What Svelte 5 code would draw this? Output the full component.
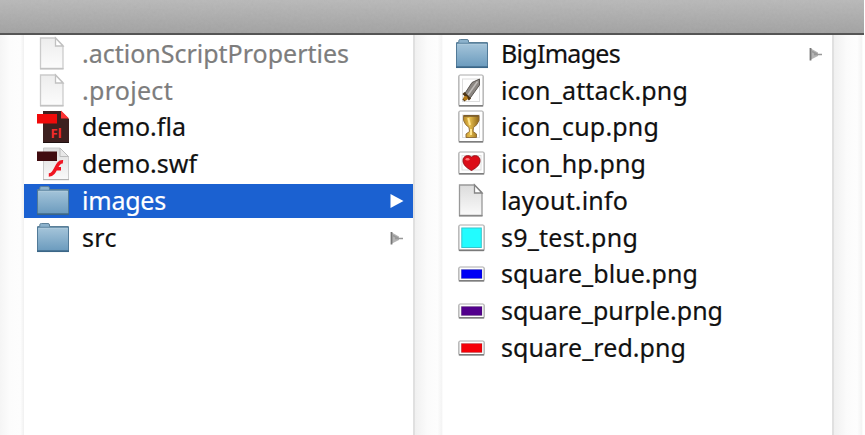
<script>
  const left = [
    { name: '.actionScriptProperties', icon: 'doc', dim: true, w: 267 },
    { name: '.project', icon: 'doc', dim: true, w: 91 },
    { name: 'demo.fla', icon: 'fla', w: 104 },
    { name: 'demo.swf', icon: 'swf', w: 115 },
    { name: 'images', icon: 'folder', selected: true, arrow: true, w: 84 },
    { name: 'src', icon: 'folder', arrow: true, w: 35 },
  ];
  const right = [
    { name: 'BigImages', icon: 'folder', arrow: true, w: 119 },
    { name: 'icon_attack.png', icon: 'sword', w: 187 },
    { name: 'icon_cup.png', icon: 'cup', w: 158 },
    { name: 'icon_hp.png', icon: 'heart', w: 145 },
    { name: 'layout.info', icon: 'doc', w: 127 },
    { name: 's9_test.png', icon: 'cyan', w: 137 },
    { name: 'square_blue.png', icon: 'bar', color: '#0000f5', w: 197 },
    { name: 'square_purple.png', icon: 'bar', color: '#52008c', w: 222 },
    { name: 'square_red.png', icon: 'bar', color: '#f50008', w: 185 },
  ];

  function fit(node, width) {
    const range = document.createRange();
    range.selectNodeContents(node);
    const natural = range.getBoundingClientRect().width;
    node.style.letterSpacing = `${(width - natural) / node.textContent.length}px`;
  }
</script>

{#snippet frame(x, y, w, h)}
  <rect x={x - 1} {y} width={w + 2} height={h + 1.5} rx="2" fill="#999" opacity=".5" />
  <rect {x} {y} width={w} height={h} rx="1" fill="#fff" stroke="#aaa" stroke-width="1" />
  <path d="M{x} {y + h + 0.3}h{w}" stroke="#777" stroke-width="1.3" />
{/snippet}

{#snippet glyph(item)}
  <svg class="icon" class:faded={item.dim && item.icon === 'doc'} width="36" height="36" viewBox="0 0 36 36">
    {#if item.icon === 'doc'}
      <path d="M5.5 2H20.5L28 9.5V32.5H5.5Z" fill="url(#paper)" stroke="#999" stroke-width="1.3" />
      <path d="M5 32.8H28.5" stroke="#858585" stroke-width="1.4" />
      <path d="M20.5 2V10H28Z" fill="#fff" stroke="#858585" stroke-width="1.3" />
    {:else if item.icon === 'folder'}
      <path d="M2.7 31V6.5H4.8V4.7Q4.8 3.5 6.5 3.5H13Q14.5 3.5 14.5 5V6.5H33.3V31Z" fill="#8cb2cc" stroke="#5d8199" />
      <rect x="2.5" y="7.3" width="31" height="24" fill="url(#blue)" stroke="#517a98" />
      <path d="M3.5 8.3H32.5" stroke="#b0cbdc" />
      <path d="M2 31.2H34" stroke="#3b6687" stroke-width="1.7" />
    {:else if item.icon === 'fla'}
      <path d="M8 2H26L34 10V34H8Z" fill="#3d201f" />
      <path d="M8 33.5H34" stroke="#1e1010" />
      <path d="M26 1.5V9.5H34Z" fill="#f33" />
      <rect x="2" y="5" width="20" height="9.5" fill="#f00a0a" />
      <text x="15.5" y="28.5" font-size="13" font-weight="700" fill="#f22b2b">Fl</text>
    {:else if item.icon === 'swf'}
      <path d="M8.5 2H25L33.5 10.5V33.5H8.5Z" fill="url(#paper)" stroke="#ccc" />
      <path d="M25 2V10.5H33.5Z" fill="#e8e8e8" stroke="#bbb" />
      <path d="M8 33.7H34" stroke="#aaa" />
      <rect x="2" y="5.5" width="20" height="9.5" fill="#400c10" />
      <path d="M28 15.8C20.5 15 21.5 29 13.8 29M20 22.7H26" fill="none" stroke="#f01522" stroke-width="3.5" />
    {:else if item.icon === 'sword'}
      {@render frame(5, 2, 24, 30.5)}
      <rect x="8.5" y="6" width="17" height="22.5" fill="#fff" stroke="#ddd" />
      <path d="M10.5 21L18 9.5L25.5 6V12L15.5 26Z" fill="#8b8681" stroke="#5b5651" />
      <path d="M14 22L23.5 8.5" stroke="#c0bcb8" stroke-width="1.5" />
      <path d="M9.5 20L16 26.5M9.5 27.5L13 23.5" stroke="#4e3515" stroke-width="3" />
      <circle cx="11.5" cy="25.3" r="2.2" fill="#b47a16" />
    {:else if item.icon === 'cup'}
      {@render frame(5, 2, 24, 30.5)}
      <rect x="8.5" y="6" width="17" height="22.5" fill="#fff" stroke="#ddd" />
      <path d="M9.5 6.5H25V11.5Q23.5 16 19.5 18.5L19 22.5L22.5 25V28.5H12V25L15.5 22.5L15 18.5Q11 16 9.5 11.5Z" fill="url(#gold)" stroke="#8a6731" stroke-width=".9" />
      <path d="M10 7H24.5" stroke="#76582b" stroke-width="1.5" />
      <path d="M14.2 9L16 16M17 20V26" stroke="#ffe590" stroke-width="2" />
    {:else if item.icon === 'heart'}
      {@render frame(5, 6, 25, 21.5)}
      <rect x="8" y="9.5" width="19" height="14.5" fill="#fff" stroke="#ddd" />
      <path d="M17.5 24.5C12 21.5 9 18.5 9 14.5C9 9.5 14.5 8.5 17.5 11C20.5 8.5 26 9.5 26 14.5C26 18.5 23 21.5 17.5 24.5Z" fill="#dc0d18" stroke="#971018" />
      <ellipse cx="13.5" cy="13.3" rx="2" ry="1.3" fill="#f77" />
    {:else if item.icon === 'cyan'}
      {@render frame(5, 5, 25, 25)}
      <rect x="7.8" y="8" width="19.5" height="19.5" fill="#22fcff" stroke="#35c6ce" />
    {:else}
      {@render frame(5, 11, 25, 13.5)}
      <rect x="7.3" y="13.5" width="20.7" height="9" fill={item.color} stroke="#333" stroke-opacity=".25" stroke-width=".8" />
    {/if}
  </svg>
{/snippet}

{#snippet column(items)}
  <ul class="column">
    {#each items as item}
      <li class="row" class:selected={item.selected} class:dim={item.dim}>
        {@render glyph(item)}
        <span class="name" use:fit={item.w}>{item.name}</span>
        {#if item.arrow}
          <svg class="arrow" width="14" height="16" viewBox="0 0 14 16">
            {#if item.selected}
              <path d="M.5 1L13.5 8L.5 15Z" fill="#fff" />
            {:else}
              <path d="M1 2L9 6.5V10L1 14Z" fill="#b5b5b5" />
              <path d="M1.5 2V14.5" stroke="#777" stroke-width="1.8" />
              <path d="M5 8.5H13M3 5.5L8 8" stroke="#999" stroke-width="1.5" />
            {/if}
          </svg>
        {/if}
      </li>
    {/each}
  </ul>
{/snippet}

<svg class="defs" width="0" height="0" aria-hidden="true">
  <defs>
    <linearGradient id="paper" x1="0" y1="0" x2="0" y2="1"><stop stop-color="#dcdcdc" /><stop offset="1" stop-color="#fafafa" /></linearGradient>
    <linearGradient id="blue" x1="0" y1="0" x2="0" y2="1"><stop stop-color="#a5c5da" /><stop offset="1" stop-color="#6a9abd" /></linearGradient>
    <linearGradient id="gold"><stop stop-color="#b88927" /><stop offset=".4" stop-color="#e6bd4c" /><stop offset="1" stop-color="#906718" /></linearGradient>
    <filter id="grain" x="0" y="0" width="100%" height="100%">
      <feTurbulence type="fractalNoise" baseFrequency=".35" numOctaves="2" seed="4" />
      <feColorMatrix type="saturate" values="0" />
    </filter>
  </defs>
</svg>

<main>
  <header><svg width="864" height="33"><rect width="864" height="33" filter="url(#grain)" opacity=".07" /></svg></header>
  <div class="browser">
    <div class="gutter first"></div>
    {@render column(left)}
    <div class="gutter"></div>
    {@render column(right)}
    <div class="gutter last"></div>
  </div>
</main>

<style>
  :global(body) { margin: 0; background: #fff; overflow: hidden; }
  .defs { position: absolute; }
  main {
    width: 865px; height: 435px; display: flex; flex-direction: column; overflow: hidden;
    font-family: 'Noto Sans', 'Open Sans', sans-serif; font-size: 25px; color: #111; background: #fff;
  }
  header {
    box-sizing: border-box; width: 864px; height: 34.5px; flex: none;
    background: linear-gradient(#b9b9b9, #a2a2a2); border-bottom: 2px solid #555;
  }
  header svg { display: block; }
  .browser { display: flex; flex: 1; }
  .gutter {
    box-sizing: border-box; width: 30px; flex: none; border-left: 2px solid #e0e0e0;
    background: linear-gradient(90deg, #f0f0f0, #fbfbfb 45%, #fdfdfd 80%, #f4f4f4 95%, #fff);
  }
  .first { width: 24px; border-left: 0; background: linear-gradient(90deg, #f5f5f5, #fcfcfc 40%, #fdfdfd 85%, #f0f0f0); }
  .last { width: 31px; }
  .column {
    box-sizing: border-box; width: 389px; flex: none; margin: 0; padding: 2.1px 0 0; list-style: none;
    display: flex; flex-direction: column; gap: 2px;
  }
  .row { box-sizing: border-box; height: 34.75px; padding: 0 9px 0 11px; display: flex; align-items: center; flex: none; }
  .selected { background: #1b61d1; color: #fff; }
  .dim { color: #7d7d7d; }
  .icon { flex: none; }
  .faded { opacity: .5; }
  .icon text { font-family: 'Noto Sans', sans-serif; }
  .name { margin-left: 11px; padding-bottom: 2px; line-height: 34px; white-space: nowrap; flex: 1; -webkit-text-stroke: .2px currentColor; }
  .arrow { flex: none; }
</style>
